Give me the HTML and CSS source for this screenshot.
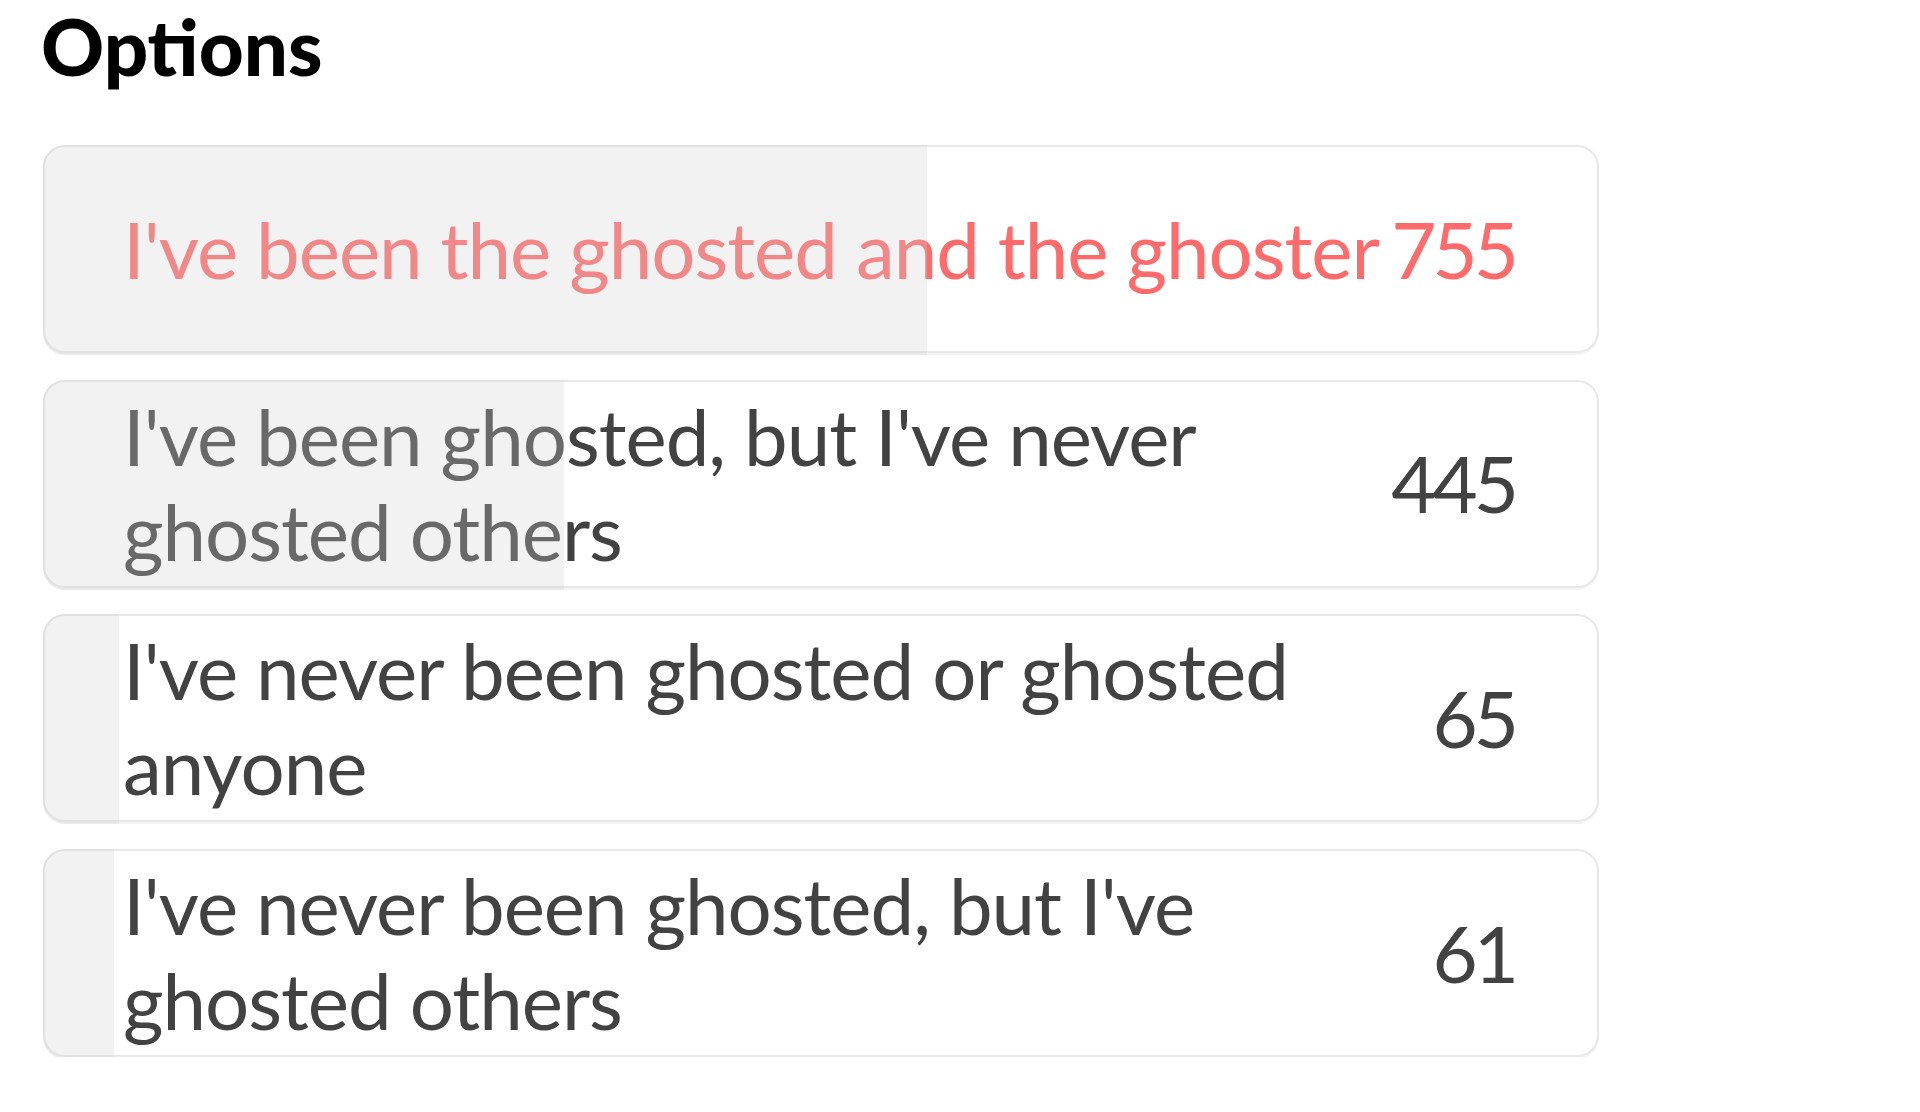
FILE: index.html
```html
<!DOCTYPE html>
<html lang="en">
<head>
<meta charset="utf-8">
<title>Options</title>
<link rel="stylesheet" href="styles.css">
</head>
<body>
<main class="poll">
  <h1 class="poll-title">Options</h1>
  <ul class="options">
    <li class="option option-selected">
      <div class="option-fill" style="width: 56.94%"></div>
      <span class="option-label">I've been the ghosted and the ghoster</span>
      <span class="option-count">755</span>
    </li>
    <li class="option">
      <div class="option-fill" style="width: 33.56%"></div>
      <span class="option-label">I've been ghosted, but I've never ghosted others</span>
      <span class="option-count">445</span>
    </li>
    <li class="option">
      <div class="option-fill" style="width: 4.90%"></div>
      <span class="option-label">I've never been ghosted or ghosted anyone</span>
      <span class="option-count">65</span>
    </li>
    <li class="option">
      <div class="option-fill" style="width: 4.60%"></div>
      <span class="option-label">I've never been ghosted, but I've ghosted others</span>
      <span class="option-count">61</span>
    </li>
  </ul>
</main>
</body>
</html>
```

FILE: styles.css
```css
html, body {
  margin: 0;
  padding: 0;
  background: #ffffff;
}

body {
  font-family: Lato, "Noto Sans", sans-serif;
  color: #424242;
}

.poll {
  padding: 7px 0 0 43px;
  width: 1556px;
}

.poll-title {
  margin: 0 0 0 -2px;
  font-size: 78px;
  line-height: 1;
  font-weight: 900;
  color: #000000;
}

.options {
  list-style: none;
  margin: 60px 0 0 0;
  padding: 0;
  display: flex;
  flex-direction: column;
  gap: 26.7px;
}

.option {
  position: relative;
  box-sizing: border-box;
  min-height: 208px;
  display: flex;
  align-items: center;
  padding: 7px 82px 7px 78px;
  border: 2px solid #e8e8e8;
  border-radius: 22px;
  box-shadow: 0 2px 1px rgba(0, 0, 0, 0.05);
  background: #ffffff;
  font-size: 78px;
  line-height: 95px;
}

.option-label {
  flex: 1 1 auto;
  min-width: 0;
  letter-spacing: -1px;
}

.option-count {
  flex: 0 0 auto;
  margin-left: 8px;
  letter-spacing: -4px;
}

.option-selected {
  color: #ff6b6b;
}

.option-fill {
  position: absolute;
  left: -2px;
  top: -2px;
  bottom: -4px;
  background: rgba(208, 208, 208, 0.28);
  border-radius: 22px 0 0 22px;
  pointer-events: none;
  z-index: 1;
}
```
